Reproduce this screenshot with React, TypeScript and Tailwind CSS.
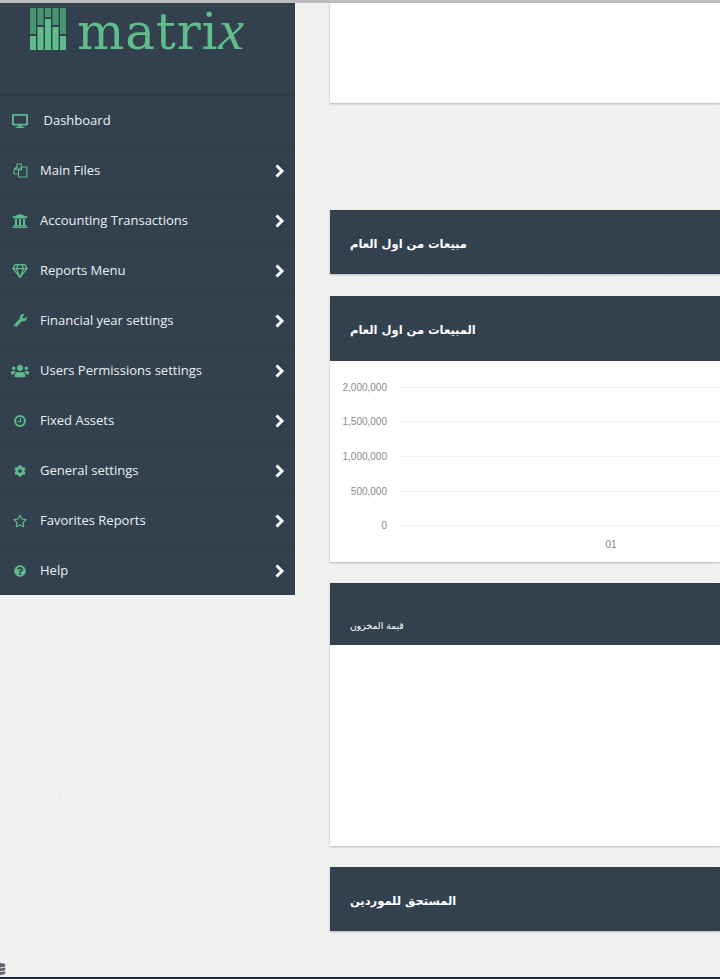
import type { ReactNode } from "react";
import { FaCog, FaDatabase, FaDesktop, FaRegGem, FaRegStar, FaQuestionCircle, FaUniversity, FaUsers, FaWrench } from "react-icons/fa";

function FilesIcon() {
  return (
    <svg width="15" height="15" viewBox="0 0 15 15" fill="none" stroke="currentColor" strokeWidth="1.1">
      <path d="M1 6.5 L4 3.5 V1 H8.5 V4" />
      <path d="M1 6.5 H4 V3.5 M1 6.5 V11 H5.5" />
      <path d="M5.5 6.5 L8.5 4 H13.8 V14 H5.5 Z" />
      <path d="M5.5 7 H8.5 V4" />
    </svg>
  );
}

function ClockIcon() {
  return (
    <svg width="12" height="12" viewBox="0 0 12 12" fill="none" stroke="currentColor">
      <circle cx="6" cy="6" r="4.9" strokeWidth="2" />
      <path d="M6.5 3 V6.5 H3.5" strokeWidth="1.2" />
    </svg>
  );
}

function Chevron() {
  return (
    <svg className="mr-[10px]" width="11" height="14" viewBox="0 0 11 14" fill="none" stroke="#fff" strokeWidth="3">
      <path d="M2.5 1.5 L8 7 L2.5 12.5" />
    </svg>
  );
}

const menuItems: { label: string; icon: ReactNode }[] = [
  { label: "Main Files", icon: <FilesIcon /> },
  { label: "Accounting Transactions", icon: <FaUniversity className="h-4 w-4" /> },
  { label: "Reports Menu", icon: <FaRegGem className="h-4 w-4" /> },
  { label: "Financial year settings", icon: <FaWrench className="h-[13px] w-[13px]" /> },
  { label: "Users Permissions settings", icon: <FaUsers className="h-[18px] w-[18px]" /> },
  { label: "Fixed Assets", icon: <ClockIcon /> },
  { label: "General settings", icon: <FaCog className="h-3 w-3" /> },
  { label: "Favorites Reports", icon: <FaRegStar className="h-[14px] w-[14px]" /> },
  { label: "Help", icon: <FaQuestionCircle className="h-3 w-3" /> },
];

const logoBars = [
  { x: 30, split: 32 },
  { x: 37.5, split: 23 },
  { x: 45, split: 15 },
  { x: 52.5, split: 23 },
  { x: 60, split: 32 },
];

const arabicFont = "font-['DejaVu_Sans',sans-serif]";

function Logo() {
  return (
    <div className="relative h-[93px] border-b border-[#2d3a46]">
      <svg className="absolute left-0 top-0" width="70" height="50" viewBox="0 0 70 50">
        {logoBars.map((bar) => (
          <g key={bar.x}>
            <rect x={bar.x} y="5" width="6" height={bar.split - 6} fill="#479473" />
            <rect x={bar.x} y={bar.split + 1} width="6" height={46 - bar.split} fill="#5fbd8b" />
          </g>
        ))}
      </svg>
      <div className="absolute left-[77px] top-[-2px] whitespace-nowrap font-['DejaVu_Serif',serif] text-[50px] leading-[58px] tracking-[0.8px] text-[#5fbd8b]">
        matri
        <span className="font-['Liberation_Serif',serif] text-[58px] italic leading-[58px]">x</span>
      </div>
    </div>
  );
}

function MenuRow({ label, icon, arrow = true, indent }: { label: string; icon: ReactNode; arrow?: boolean; indent?: boolean }) {
  return (
    <div className="flex h-[50px] items-center border-b border-[#2f3c48] last:h-[49px] last:border-b-0">
      <span className="flex w-10 shrink-0 justify-center text-[#5cb98b]">{icon}</span>
      <span className={`flex-1 text-[13px] text-[#eceff1] ${indent ? "pl-[3.5px]" : ""}`}>{label}</span>
      {arrow && <Chevron />}
    </div>
  );
}

function PanelHeader({ title, tall }: { title: string; tall?: boolean }) {
  return (
    <div className={`flex items-center bg-[#33414f] pl-5 ${tall ? "h-[65px] pt-1" : "h-[64px] pt-[6px]"}`}>
      <h3 dir="rtl" className={`${arabicFont} text-[11.5px] font-bold text-white`}>
        {title}
      </h3>
    </div>
  );
}

function SalesChart() {
  const ticks = [
    { label: "2,000,000", y: 387 },
    { label: "1,500,000", y: 421 },
    { label: "1,000,000", y: 456 },
    { label: "500,000", y: 491 },
    { label: "0", y: 525 },
  ];
  return (
    <svg width="390" height="201" viewBox="0 361 390 201" className="block">
      {ticks.map((tick) => (
        <g key={tick.label}>
          <line x1="70" x2="390" y1={tick.y + 0.5} y2={tick.y + 0.5} stroke="#f1f1f1" />
          <text x="57" y={tick.y + 4} textAnchor="end" fontSize="10" fill="#8a8a8a" fontFamily="Liberation Sans, sans-serif">
            {tick.label}
          </text>
        </g>
      ))}
      <text x="281" y="548" textAnchor="middle" fontSize="10" fill="#7c8698" fontFamily="Liberation Sans, sans-serif">
        01
      </text>
    </svg>
  );
}

const cardShadow = "shadow-[0_1px_2px_rgba(0,0,0,0.25)]";

export default function App() {
  return (
    <div className="relative flex h-[979px] w-[720px] flex-col overflow-hidden bg-[#f1f1f0] bg-[radial-gradient(circle,rgba(0,0,0,0.08)_0.6px,transparent_1px),radial-gradient(circle,rgba(0,0,0,0.04)_0.7px,transparent_1.2px)] bg-[length:97px_83px,61px_47px] bg-[position:11px_7px,29px_19px] font-['Open_Sans',sans-serif]">
      <div className="h-[3px] shrink-0 bg-[#bdbdbd]" />

      <div className="flex min-h-0 flex-1 items-start">
        <aside className="w-[295px] shrink-0 bg-[#33414f]">
          <Logo />
          <MenuRow label="Dashboard" icon={<FaDesktop className="h-4 w-4" />} arrow={false} indent />
          {menuItems.map((item) => (
            <MenuRow key={item.label} {...item} />
          ))}
        </aside>

        <main className="ml-[35px] flex w-[390px] shrink-0 flex-col">
          <div className={`h-[100px] bg-white ${cardShadow}`} />

          <div className={`mt-[107px] ${cardShadow}`}>
            <PanelHeader title="مبيعات من اول العام" />
          </div>

          <div className={`mt-[22px] bg-white ${cardShadow}`}>
            <PanelHeader title="المبيعات من اول العام" tall />
            <SalesChart />
          </div>

          <div className={`mt-[21px] bg-white ${cardShadow}`}>
            <div className="flex h-[62px] items-end bg-[#33414f] pb-[12px] pl-5">
              <h3 dir="rtl" className={`${arabicFont} text-[9.3px] text-white`}>
                قيمة المخزون
              </h3>
            </div>
            <div className="h-[201px]" />
          </div>

          <div className={`mt-[21px] ${cardShadow}`}>
            <PanelHeader title="المستحق للموردين" />
          </div>
        </main>
      </div>

      <FaDatabase className="absolute bottom-[4px] left-[-6px] h-3 w-3 text-[#5d6670]" />
      <div className="h-[2px] shrink-0 bg-[#17293a]" />
    </div>
  );
}
